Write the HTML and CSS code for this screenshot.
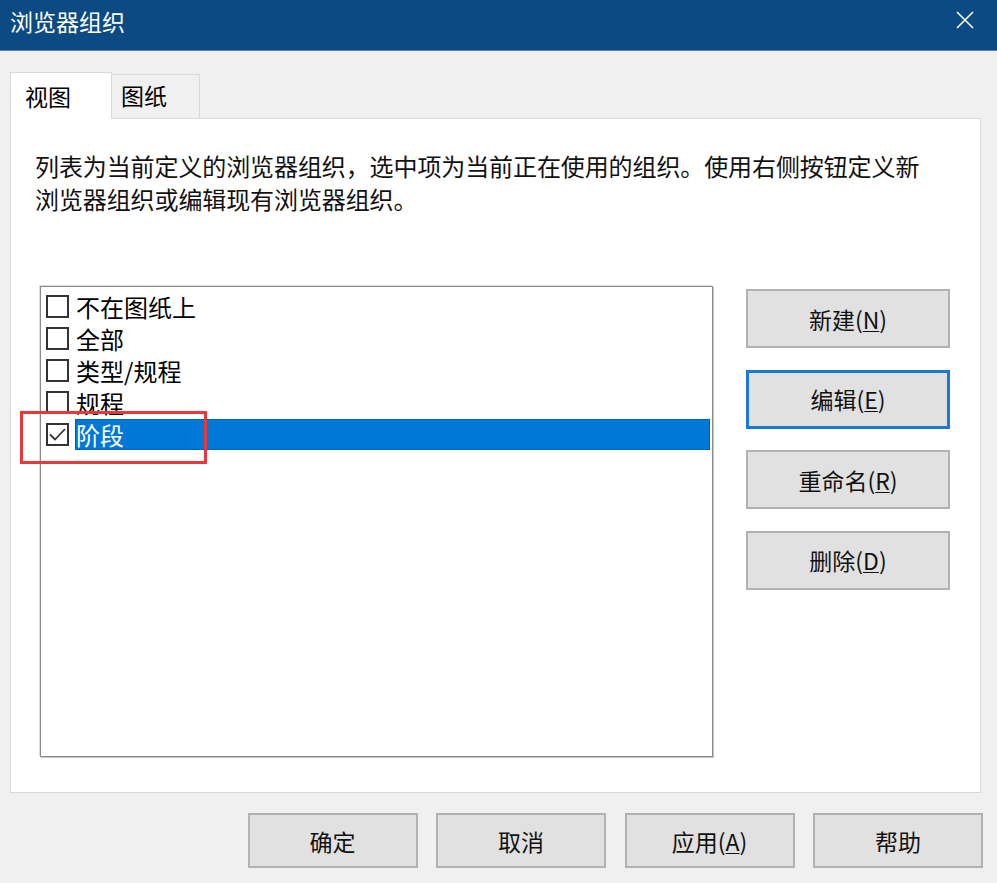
FILE: index.html
```html
<!DOCTYPE html>
<html lang="zh-CN">
<head>
<meta charset="utf-8">
<title>浏览器组织</title>
<link rel="stylesheet" href="styles.css">
</head>
<body>
<div class="window">
  <div class="titlebar">
    <span class="title">浏览器组织</span>
    <svg class="close" width="18" height="18" viewBox="0 0 18 18"><path d="M1 1 L17 17 M17 1 L1 17" stroke="#ffffff" stroke-width="1.6" fill="none"/></svg>
  </div>
  <div class="body">
    <div class="tabs">
      <div class="tab active">视图</div>
      <div class="tab">图纸</div>
    </div>
    <div class="panel">
      <p class="desc">列表为当前定义的浏览器组织，选中项为当前正在使用的组织。使用右侧按钮定义新<br>浏览器组织或编辑现有浏览器组织。</p>
      <div class="main">
        <div class="listbox">
          <div class="item"><span class="cb"></span><span class="label">不在图纸上</span></div>
          <div class="item"><span class="cb"></span><span class="label">全部</span></div>
          <div class="item"><span class="cb"></span><span class="label">类型/规程</span></div>
          <div class="item"><span class="cb"></span><span class="label">规程</span></div>
          <div class="item selected"><span class="cb"><svg width="19" height="19" viewBox="0 0 19 19"><polyline points="2,9.5 7,14.5 17,4" fill="none" stroke="#333" stroke-width="1.8"/></svg></span><span class="label">阶段</span></div>
        </div>
        <div class="side">
          <div class="btn">新建(<u>N</u>)</div>
          <div class="btn default">编辑(<u>E</u>)</div>
          <div class="btn">重命名(<u>R</u>)</div>
          <div class="btn">删除(<u>D</u>)</div>
        </div>
      </div>
    </div>
    <div class="footer">
      <div class="btn fbtn">确定</div>
      <div class="btn fbtn">取消</div>
      <div class="btn fbtn">应用(<u>A</u>)</div>
      <div class="btn fbtn">帮助</div>
    </div>
  </div>
  <div class="annotation"></div>
</div>
</body>
</html>
```
FILE: styles.css
```css
* { box-sizing: border-box; }
html, body { margin: 0; padding: 0; }
body {
  background: #f0f0f0;
  font-family: "Noto Sans CJK SC", "Noto Sans", sans-serif;
  color: #000;
}
.window {
  position: relative;
  width: 997px;
  height: 883px;
  background: #f0f0f0;
  overflow: hidden;
}
.titlebar {
  height: 51px;
  background: #0b4a82;
  display: flex;
  align-items: flex-start;
  justify-content: space-between;
  padding: 5px 23px 0 10px;
  border-bottom: 1px solid #5a86b0;
}
.title {
  color: #fff;
  font-size: 23px;
  line-height: 32px;
  font-weight: 400;
}
.close { margin-top: 6px; }
.body {
  padding: 20px 0 0 10px;
}
.tabs {
  display: flex;
  align-items: flex-end;
  height: 47px;
}
.tab {
  font-size: 23px;
  line-height: 40px;
  border: 1px solid #d9d9d9;
  border-bottom: none;
  background: #f0f0f0;
  height: 44px;
  width: 88px;
  padding-left: 9px;
  border-left: none;
}
.tab.active {
  background: #fff;
  height: 47px;
  width: 102px;
  padding-left: 14px;
  line-height: 46px;
  border-left: 1px solid #d9d9d9;
  margin-bottom: -1px;
  position: relative;
  z-index: 1;
}
.panel {
  width: 971px;
  height: 675px;
  background: #fff;
  border: 1px solid #d9d9d9;
  padding: 30px 0 0 24px;
}
.desc {
  margin: 0;
  font-size: 24px;
  line-height: 33px;
  letter-spacing: -0.1px;
  color: #111;
}
.main {
  display: flex;
  margin-top: 71px;
  margin-left: 5px;
}
.listbox {
  width: 673px;
  height: 471px;
  border: 1px solid #8a8a8a;
  box-shadow: 1px 1px 0 #c6c6c6, -1px -1px 0 #dcdcdc;
  background: #fff;
  padding: 3px 2px 0 5px;
}
.item {
  display: flex;
  align-items: center;
  height: 32px;
}
.cb {
  width: 23px;
  height: 23px;
  border: 2px solid #333;
  flex: none;
  display: flex;
  align-items: center;
  justify-content: center;
  background: #fff;
}
.label {
  margin-left: 6px;
  font-size: 24px;
  line-height: 30px;
  height: 31px;
  flex: 1;
  padding-left: 0;
  border: 1px solid transparent;
}
.item.selected .label {
  background: #0078d7;
  color: #fff;
  border: 1px dotted #26415e;
}
.side {
  display: flex;
  flex-direction: column;
  gap: 21.5px;
  margin-left: 33px;
  margin-top: 3px;
}
.btn {
  width: 204px;
  height: 59px;
  background: #e1e1e1;
  border: 2px solid #b2b2b2;
  display: flex;
  align-items: center;
  justify-content: center;
  font-size: 23px;
  color: #111;
}
.btn u { text-underline-offset: 2px; text-decoration-thickness: 1px; }
.btn.default {
  border: 3px solid #1a7ad6;
}
.footer {
  width: 973px;
  display: flex;
  justify-content: flex-end;
  gap: 18.5px;
  margin-top: 20px;
}
.fbtn {
  width: 170px;
  height: 55px;
}
.annotation {
  position: absolute;
  left: 20px;
  top: 411px;
  width: 187px;
  height: 53px;
  border: 3.5px solid #e8383a;
  pointer-events: none;
}
```
